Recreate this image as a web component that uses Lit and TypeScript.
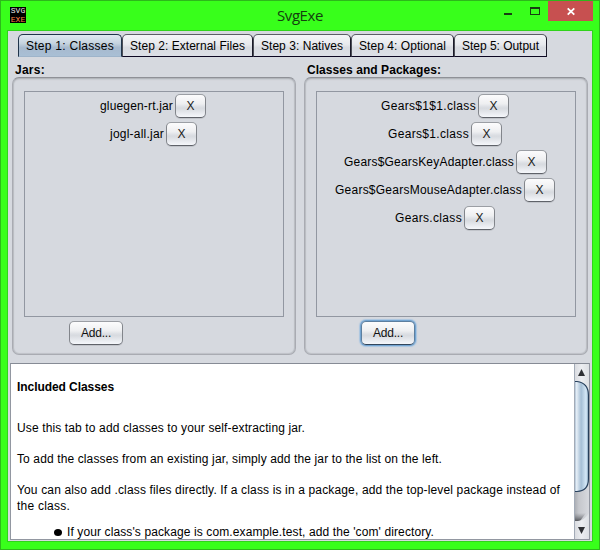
import { LitElement, html, css, svg } from "lit";
import { customElement, property } from "lit/decorators.js";
import { styleMap } from "lit/directives/style-map.js";

const ctx = document.createElement("canvas").getContext("2d")!;

/** Letter spacing that makes `text` occupy `width` pixels. */
function track(text: string, width: number, font: string): string {
  ctx.font = font;
  return `${((width - ctx.measureText(text).width) / text.length).toFixed(4)}px`;
}

const UI = '12px "Liberation Sans"';
const UI_BOLD = 'bold 12px "Liberation Sans"';

function fitted(text: string, width: number, font = UI) {
  return html`<span style=${styleMap({ letterSpacing: track(text, width, font) })}>${text}</span>`;
}

interface Entry { name: string; width: number; lead: number; gap: number }

const TABS = [
  { label: "Step 1: Classes", width: 104, text: 88, on: true },
  { label: "Step 2: External Files", width: 131, text: 115, on: false },
  { label: "Step 3: Natives", width: 98, text: 82, on: false },
  { label: "Step 4: Optional", width: 103, text: 87, on: false },
  { label: "Step 5: Output", width: 93, text: 77, on: false },
];

const JARS: Entry[] = [
  { name: "gluegen-rt.jar", width: 73, lead: 75, gap: 2 },
  { name: "jogl-all.jar", width: 54, lead: 85, gap: 2 },
];

const CLASSES: Entry[] = [
  { name: "Gears$1$1.class", width: 95, lead: 64, gap: 2 },
  { name: "Gears$1.class", width: 81, lead: 71, gap: 2 },
  { name: "Gears$GearsKeyAdapter.class", width: 170, lead: 27, gap: 2 },
  { name: "Gears$GearsMouseAdapter.class", width: 187, lead: 18, gap: 2 },
  { name: "Gears.class", width: 67, lead: 78, gap: 2 },
];

@customElement("entry-panel")
export class EntryPanel extends LitElement {
  @property({ attribute: false }) entries: Entry[] = [];
  @property({ type: Boolean }) focused = false;

  static styles = css`
    :host { display: block; width: 284px; height: 278px; box-sizing: border-box;
      border: 1px solid #a9abb2; border-top: 1px solid #8f9197; border-radius: 7px; background: #d6d9df;
      padding: 13px 11px 0;
      box-shadow: inset 0 2px 2px -1px #a9abb1, inset 1px 0 1px #babdc3, inset -1px 0 1px #babdc3, inset 0 -1px 1px #c1c3c9; }
    .list { height: 226px; box-sizing: border-box; border: 1px solid #9297a1; padding-top: 2px; }
    .row { display: flex; height: 24px; margin-bottom: 4px; line-height: 25px; white-space: nowrap; }
    .name { flex: none; }
    .btn { flex: none; box-sizing: border-box; height: 24px; border: 1px solid #82858b; border-top-color: #9b9ea4;
      border-bottom-color: #5f6269; border-radius: 5px; text-align: center; line-height: 23px; color: #111;
      background: linear-gradient(#fcfcfd 0%, #eeeff1 40%, #dbdee3 55%, #d8dbe0 62%, #f5f7fb 100%);
      box-shadow: 0 1px 0 #c1c4ca; }
    .x { width: 31px; color: #222; }
    .add { width: 54px; margin: 4px 0 0 45px; }
    .focused { border-color: #5d7f9f; border-bottom-color: #33465c; box-shadow: 0 0 0 1px #73a4d1, 0 0 1px 2px #a9c5e0; }
  `;

  render() {
    return html`
      <div class="list">
        ${this.entries.map((e) => html`
          <div class="row">
            <div class="name" style=${styleMap({ marginLeft: `${e.lead}px`, width: `${e.width + e.gap}px` })}>${fitted(e.name, e.width)}</div>
            <div class="btn x">X</div>
          </div>`)}
      </div>
      <div class="btn add ${this.focused ? "focused" : ""}">${fitted("Add...", 30)}</div>
    `;
  }
}

@customElement("app-root")
export class AppRoot extends LitElement {
  static styles = css`
    :host { display: block; width: 600px; height: 550px; box-sizing: border-box; overflow: hidden;
      border: 1px solid #2db81b; background: #38ff1b; color: #000; font: 12px "Liberation Sans", Arial, sans-serif; }
    .titlebar { display: flex; height: 29px; }
    .logo { width: 16px; height: 16px; margin: 6px 0 0 9px; flex: none; }
    .title { flex: 1; text-align: center; padding-left: 76px; font: 15px/29px "Open Sans", "Noto Sans", sans-serif; color: #14400f; }
    .controls { flex: none; width: 95px; height: 20px; margin-right: 6px; }
    .client { margin: 0 6px; width: 584px; height: 510px; border: 1px solid #30d31b; background: #d6d9df; overflow: hidden; }
    .tabs { display: flex; padding: 3px 0 0 10px; }
    .tab { height: 23px; box-sizing: border-box; border: 1px solid #5c5e66; border-right-color: #1b1a29; border-bottom: 1px solid #0c0722;
      border-left-color: #4c4e57; border-radius: 5px 5px 0 0; text-align: center; line-height: 22px; white-space: nowrap;
      background: linear-gradient(#f5f6f8, #e7e9ed 45%, #d8dbe1 60%, #dcdfe6); }
    .on { border-color: #20344a; border-bottom-color: #9eb4ca; background: linear-gradient(#e0e8f0, #c5d3df 40%, #a7bace 60%, #a9bfd5); }
    .captions { display: flex; height: 20px; font-weight: bold; line-height: 26px; padding-left: 7px; }
    .cap-left { width: 292px; }
    .panels { display: flex; gap: 8px; padding-left: 4px; }
    .help { display: flex; width: 580px; height: 177px; margin: 8px 0 0 2px; box-sizing: border-box;
      border: 1px solid #9297a1; border-top-color: #868b95; background: #fff; overflow: hidden; }
    .doc { flex: 1; padding: 15px 0 0 6px; line-height: 16px; white-space: nowrap; }
    .head { font-weight: bold; height: 41px; }
    .para { height: 31px; }
    .item { display: flex; align-items: center; padding-left: 37px; margin-top: 10px; height: 16px; }
    .dot { width: 8px; height: 7px; border-radius: 50%; background: #000; margin: 1px 5px 0 0; }
    .scroll { flex: none; width: 15px; height: 175px; }
  `;

  private controls = svg`
    <rect x="6" y="12" width="8" height="2" fill="#183d13"/>
    <rect x="32.5" y="6.5" width="9" height="7" fill="none" stroke="#183d13"/>
    <path d="M32 7h10" stroke="#183d13" stroke-width="2"/>
    <rect x="50" y="0" width="45" height="20" fill="#c75050"/>
    <path d="M69.7 7.3l6.6 6.4M76.3 7.3l-6.6 6.4" stroke="#fff" stroke-width="1.8"/>`;

  private scrollbar = svg`
    <defs>
      <linearGradient id="track"><stop offset="0" stop-color="#a6a9af"/><stop offset=".3" stop-color="#c5c7cc"/><stop offset="1" stop-color="#d9dbe0"/></linearGradient>
      <linearGradient id="thumb"><stop offset="0" stop-color="#8ba5be"/><stop offset=".18" stop-color="#e6eff7"/><stop offset=".35" stop-color="#c1d3e3"/><stop offset=".5" stop-color="#a5bfd6"/><stop offset=".8" stop-color="#cfe3f3"/><stop offset="1" stop-color="#bad4e8"/></linearGradient>
      <linearGradient id="cap"><stop offset="0" stop-color="#d7d9de"/><stop offset=".5" stop-color="#eceef1"/><stop offset="1" stop-color="#dde0e4"/></linearGradient>
      <linearGradient id="shade" x2="0" y2="1"><stop offset="0" stop-color="#77797e" stop-opacity="0"/><stop offset="1" stop-color="#55575c"/></linearGradient>
    </defs>
    <rect width="16" height="175" fill="url(#track)"/>
    <path d="M0 0H15V30L10 21L0 18Z" fill="url(#cap)"/>
    <path d="M0 17.5H3Q14.4 19 14.4 31V115Q14.4 127 3 127.5H0Z" fill="url(#thumb)" stroke="#263f5b" stroke-width="1.2"/>
    <path d="M0 149H12L6 157H0Z" fill="url(#shade)"/>
    <path d="M0 157H4Q11 156 15 149V175H0Z" fill="url(#cap)"/>
    <rect width="1" height="175" fill="#a3abb7"/>
    <path d="M7.5 5L11 12H4Z" fill="#2e3034"/>
    <path d="M7.5 170L11 163H4Z" fill="#2e3034"/>`;

  render() {
    return html`
      <div class="titlebar">
        <svg class="logo" viewBox="0 0 16 16">
          <rect width="16" height="16" fill="#000"/>
          <text x="0.7" y="6.2" font-family="Liberation Mono" font-size="8" textLength="14.6" fill="#e8e8e8">SVG</text>
          <text x="0.7" y="15" font-family="Liberation Mono" font-size="8" textLength="14.6" fill="#ff8545">EXE</text>
        </svg>
        <div class="title">${fitted("SvgExe", 46, '15px "Open Sans"')}</div>
        <svg class="controls" viewBox="0 0 95 20">${this.controls}</svg>
      </div>
      <div class="client">
        <div class="tabs">
          ${TABS.map((t) => html`<div class="tab ${t.on ? "on" : ""}" style=${styleMap({ width: `${t.width}px` })}>${fitted(t.label, t.text)}</div>`)}
        </div>
        <div class="captions">
          <div class="cap-left">${fitted("Jars:", 30, UI_BOLD)}</div>
          <div>${fitted("Classes and Packages:", 134, UI_BOLD)}</div>
        </div>
        <div class="panels">
          <entry-panel .entries=${JARS}></entry-panel>
          <entry-panel .entries=${CLASSES} focused></entry-panel>
        </div>
        <div class="help">
          <div class="doc">
            <div class="head">${fitted("Included Classes", 97, UI_BOLD)}</div>
            <div class="para">${fitted("Use this tab to add classes to your self-extracting jar.", 288)}</div>
            <div class="para">${fitted("To add the classes from an existing jar, simply add the jar to the list on the left.", 425)}</div>
            <div>${fitted("You can also add .class files directly. If a class is in a package, add the top-level package instead of", 543)}</div>
            <div>${fitted("the class.", 53)}</div>
            <div class="item"><div class="dot"></div>${fitted("If your class's package is com.example.test, add the 'com' directory.", 367)}</div>
          </div>
          <svg class="scroll" viewBox="0 0 15 175">${this.scrollbar}</svg>
        </div>
      </div>
    `;
  }
}
